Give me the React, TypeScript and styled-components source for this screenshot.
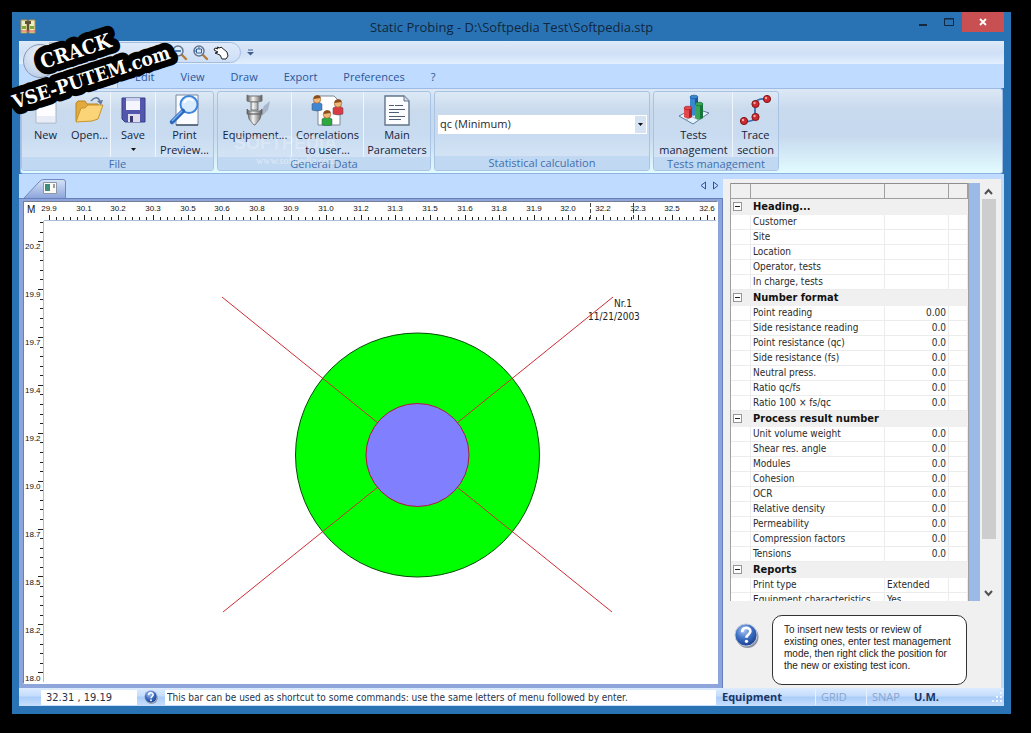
import React from 'react';
import styled, { createGlobalStyle } from 'styled-components';

const tahoma = '"DejaVu Sans Condensed", "DejaVu Sans", sans-serif';
const segoe = '"Open Sans", "Noto Sans", sans-serif';

const GlobalStyle = createGlobalStyle`
  *, *::before, *::after { box-sizing: border-box; }
  body { margin: 0; background: #000; font-family: ${segoe}; }
  button, input, select { font: inherit; color: inherit; border: 0; padding: 0; margin: 0; background: none; }
  svg { display: block; }
`;

const Desktop = styled.div`
  min-height: 100vh;
  padding: 12px 20px 19px 12px;
  display: flex;
`;
const Window = styled.main`
  position: relative;
  flex: 1;
  min-width: 0;
  display: flex;
  flex-direction: column;
  padding: 0 7px 8px;
  background: #2973b5;
`;
const TitleBar = styled.header`
  height: 29px;
  display: flex;
  align-items: center;
  justify-content: space-between;
`;
const Title = styled.h1`
  margin: 0;
  padding-left: 14px;
  flex: 1;
  text-align: center;
  font-size: 13px;
  line-height: 20px;
  font-weight: 400;
  color: #10263d;
`;
const WindowButtons = styled.div`
  display: flex;
  align-self: flex-start;
  height: 20px;
`;
const WindowButton = styled.button<{ $close?: boolean }>`
  width: ${(p) => (p.$close ? 42 : 26)}px;
  height: 20px;
  display: grid;
  place-items: center;
  background: ${(p) => (p.$close ? '#c85052' : 'transparent')};
`;
const AppIcon = styled.div`
  width: 80px;
  padding-left: 1px;
`;

const QuickBar = styled.div`
  height: 23px;
  flex: none;
  padding: 1px 0 1px 30px;
  display: flex;
  align-items: center;
  gap: 1px;
  background: linear-gradient(#dcebfa, #d5e3f5 30%, #cfe0f7 55%, #e2effd);
`;
const QuickTools = styled.div`
  height: 21px;
  width: 192px;
  padding-right: 10px;
  display: flex;
  align-items: center;
  justify-content: flex-end;
  gap: 4px;
  border: 1px solid #a4bddf;
  border-radius: 0 11px 11px 0;
  background: linear-gradient(#dfeafa, #cddff6);
`;
const ToolButton = styled.button`
  width: 17px;
  height: 18px;
  display: grid;
  place-items: center;
`;
const Orb = styled.button`
  position: absolute;
  left: 11px;
  top: 32px;
  width: 34px;
  height: 34px;
  border: 1px solid #8799b5;
  border-radius: 50%;
  background: radial-gradient(circle at 50% 30%, #eef4fc, #cbdaee 60%, #b3c6e2);
`;

const TabStrip = styled.nav`
  height: 24px;
  flex: none;
  padding-left: 32px;
  display: flex;
  background: #bfdbff;
`;
const ActiveTab = styled.button`
  width: 67px;
  margin-right: 4px;
  border-right: 1px solid #9dbbe5;
  border-radius: 0 3px 0 0;
  background: #dbe7f5;
`;
const MenuTab = styled.button`
  padding: 0 13px;
  font-size: 11px;
  line-height: 26px;
  color: #2c5697;
`;

const Ribbon = styled.section`
  height: 86px;
  flex: none;
  display: flex;
  gap: 3px;
  padding: 2px 0 2px;
  margin: 0 1px;
  border: 1px solid #9dbbe5;
  border-bottom-color: #8db2e3;
  border-radius: 3px;
  background: linear-gradient(#dce8f5, #c9daee 24%, #c6d9ee 55%, #e2fbff);
`;
const Group = styled.section<{ $width: number }>`
  width: ${(p) => p.$width}px;
  flex: none;
  display: flex;
  flex-direction: column;
  border: 1px solid #a8c3e4;
  border-radius: 3px;
  background: linear-gradient(#dde9f5, #c9daed 24%, #c8dbf0 55%, #dbe9f8);
  overflow: hidden;
`;
const GroupTools = styled.div`
  flex: 1;
  display: flex;
`;
const Caption = styled.h2`
  margin: 0;
  height: 14px;
  flex: none;
  text-align: center;
  font-size: 11px;
  line-height: 14px;
  font-weight: 400;
  color: #426fae;
  background: #c0d8f1;
`;
const RibbonButton = styled.button<{ $width: number; $divided?: boolean }>`
  width: ${(p) => p.$width}px;
  height: 65px;
  flex: none;
  display: flex;
  flex-direction: column;
  align-items: center;
  padding-top: 2px;
  font-size: 11px;
  line-height: 15px;
  color: #15233b;
  white-space: pre;
  border-left: 1px solid ${(p) => (p.$divided ? '#eef5fd' : 'transparent')};
  text-align: center;
`;
const ButtonText = styled.span`
  margin-top: 1px;
`;
const ComboBox = styled.label`
  position: relative;
  margin: 23px 2px 0 3px;
  height: 19px;
  flex: 1;
  display: flex;
  background: #fff;
`;
const Select = styled.select`
  appearance: none;
  flex: 1;
  padding: 0 18px 2px 2px;
  font-size: 11px;
  color: #26262c;
`;
const ComboArrow = styled.span`
  position: absolute;
  right: 1px;
  top: 1px;
  width: 11px;
  height: 17px;
  display: grid;
  place-items: center;
  background: #d5e3f3;
  pointer-events: none;
`;

const Workspace = styled.div`
  flex: 1;
  min-height: 0;
  display: flex;
  background: #bfdbff;
`;
const DocumentPane = styled.section`
  flex: 1;
  min-width: 0;
  display: flex;
  flex-direction: column;
`;
const DocumentTabs = styled.div`
  height: 24px;
  flex: none;
  padding: 5px 3px 0 5px;
  display: flex;
  justify-content: space-between;
`;
const DocumentTab = styled.button`
  height: 19px;
`;
const TabArrows = styled.div`
  display: flex;
  gap: 4px;
  height: 12px;
`;
const ArrowButton = styled.button`
  width: 9px;
  height: 12px;
  display: grid;
  place-items: center;
`;
const Frame = styled.div`
  flex: 1;
  min-height: 0;
  display: flex;
  padding: 2px 4px 4px;
  background: #8ea5db;
  border-top: 1px solid #6680bd;
  border-right: 1px solid #6680bd;
`;
const Drawing = styled.div`
  flex: 1;
  min-width: 0;
  border: 1px solid #777e91;
  border-right-color: #fff;
  border-bottom-color: #fff;
  background: #fff;
  overflow: hidden;
  text { font-family: "Liberation Sans", sans-serif; }
`;

const SidePane = styled.aside`
  width: 281px;
  flex: none;
  margin-top: 5px;
  display: flex;
  flex-direction: column;
  padding: 4px 4px 3px 7px;
  background: #f0f0f0;
  border-right: 3px solid #c3dbfb;
`;
const GridArea = styled.div`
  height: 418px;
  flex: none;
  display: flex;
  overflow: hidden;
`;
const GridClip = styled.div`
  flex: 1;
  min-width: 0;
  overflow: hidden;
  background: #9bbae7;
  padding-right: 11px;
`;
const PropertyTable = styled.table`
  width: 100%;
  table-layout: fixed;
  border-collapse: separate;
  border-spacing: 0;
  border-left: 1px solid #a0a0a0;
  border-right: 1px solid #a0a0a0;
  background: #fff;
  font-family: ${tahoma};
  font-size: 10px;
  color: #2b2b2b;
`;
const HeadCell = styled.th`
  height: 16px;
  padding: 0;
  background: #f0f0f0;
  border-top: 1px solid #8e8e8e;
  border-bottom: 1px solid #a0a0a0;
  border-right: 1px solid #a0a0a0;
`;
const SectionCell = styled.th`
  height: 16px;
  padding: 0 2px;
  background: #f0f0f0;
  text-align: left;
  vertical-align: top;
  font-weight: 700;
  font-size: 11px;
  line-height: 16px;
  color: #111;
`;
const Cell = styled.td<{ $text?: boolean }>`
  height: 15px;
  padding: 0 2px;
  line-height: 14px;
  white-space: nowrap;
  overflow: hidden;
  text-align: ${(p) => (p.$text === false ? 'right' : 'left')};
  border-bottom: 1px solid #ececec;
  border-right: 1px solid #ececec;
`;
const Toggle = styled.button`
  width: 9px;
  height: 9px;
  margin-top: 3px;
  display: grid;
  place-items: center;
  border: 1px solid #979797;
  background: #fff;
`;
const ScrollBar = styled.div`
  width: 17px;
  flex: none;
  display: flex;
  flex-direction: column;
  align-items: center;
  background: #f0f0f0;
`;
const ScrollButton = styled.button`
  width: 15px;
  height: 16px;
  flex: none;
  display: grid;
  place-items: center;
`;
const Track = styled.div`
  flex: 1;
  width: 14px;
`;
const Thumb = styled.div`
  height: 88%;
  background: #cdcdcd;
`;
const HelpRow = styled.div`
  display: flex;
  gap: 13px;
  padding: 14px 30px 0 4px;
`;
const HelpIcon = styled.div`
  padding-top: 8px;
`;
const Bubble = styled.p`
  margin: 0;
  flex: 1;
  height: 70px;
  padding: 8px 11px;
  border: 1px solid #333;
  border-radius: 10px;
  background: #fff;
  font: 10px/12px "Liberation Sans", sans-serif;
  color: #222;
  white-space: nowrap;
`;

const StatusBar = styled.footer`
  height: 18px;
  flex: none;
  display: flex;
  align-items: center;
  font-family: ${tahoma};
  font-size: 10px;
  color: #26334a;
  background: linear-gradient(#dcebff, #c4dcfc 45%, #a9ccf8 50%, #c8dffe);
`;
const Coordinates = styled.output`
  width: 96px;
  height: 15px;
  margin-left: 22px;
  padding-left: 5px;
  line-height: 15px;
  font-size: 11px;
  background: #fff;
`;
const StatusHelp = styled.button`
  width: 28px;
  display: grid;
  place-items: center;
`;
const Command = styled.input`
  flex: 1;
  min-width: 0;
  height: 15px;
  padding-left: 2px;
  background: #fff;
`;
const StatusCell = styled.button<{ $width: number; $off?: boolean }>`
  width: ${(p) => p.$width}px;
  height: 16px;
  padding-left: 5px;
  text-align: left;
  line-height: 16px;
  font-family: ${segoe};
  font-size: 11px;
  font-weight: ${(p) => (p.$off ? 400 : 700)};
  color: ${(p) => (p.$off ? '#86a5d1' : '#1b3564')};
  border-left: 1px solid ${(p) => (p.$off ? '#e6f2ff' : 'transparent')};
`;

const Sticker = styled.svg`
  position: absolute;
  left: 0;
  top: 12px;
  pointer-events: none;
`;
const FaintMark = styled.svg`
  position: absolute;
  left: 230px;
  top: 128px;
  pointer-events: none;
`;

const HelpGlyph = ({ size }: { size: number }) => (
  <svg width={size} height={size} viewBox="0 0 26 26">
    <defs>
      <radialGradient id={`help${size}`} cx="40%" cy="30%" r="75%">
        <stop offset="0" stopColor="#a9c6f2" />
        <stop offset=".5" stopColor="#3d6fc4" />
        <stop offset="1" stopColor="#173a86" />
      </radialGradient>
    </defs>
    <circle cx="14" cy="14.500" r="11.500" fill="#8b93a3" />
    <circle cx="12.500" cy="12.500" r="11.500" fill={`url(#help${size})`} stroke="#c5cede" />
    <path d="M8.500 9.500c0-6 8.500-5.500 8.500-.8 0 3.300-4 3.300-4 6.600" fill="none" stroke="#fff" strokeWidth="2.800" />
    <circle cx="13" cy="19" r="1.700" fill="#fff" />
  </svg>
);

const IconNew = () => (
  <svg width="32" height="32"><path d="M6 2h20v27H6z" fill="#fdfdff" stroke="#a9b4c8" /><path d="M7 22h18v6H7z" fill="#e9edf7" /></svg>
);
const IconOpen = () => (
  <svg width="32" height="32">
    <path d="M2 27V9l2-2h7l2 3h11v4" fill="#e2aa3c" stroke="#b98524" />
    <path d="M2 28l5-14h4l3-3h15l-5 14-6 2z" fill="#fbd478" stroke="#c8942e" />
    <path d="M17 7c4-5 8-4 9 1" fill="none" stroke="#63789b" strokeWidth="1.600" /><path d="M23 7l6-1-2 5z" fill="#63789b" />
  </svg>
);
const IconSave = () => (
  <svg width="32" height="32">
    <path d="M5 4h23v24H8l-3-3z" fill="#5356ad" stroke="#3b3c87" />
    <path d="M9 4h14v12H9z" fill="#f4f5fd" /><path d="M9 4h14v3H9z" fill="#ccd0ef" />
    <path d="M11 20h12v8H11z" fill="#dcdcea" /><path d="M13 22h3v6h-3z" fill="#38396f" />
  </svg>
);
const IconPreview = () => (
  <svg width="34" height="32">
    <path d="M8 1h22v30H8z" fill="#fbfcff" stroke="#78879f" /><path d="M8 31h22" stroke="#4b596e" strokeWidth="1.500" />
    <circle cx="21" cy="10.500" r="8.500" fill="#d9ecff" stroke="#3e84da" strokeWidth="2" />
    <path d="M16 9c2-5 7-5 9-2" fill="none" stroke="#fff" strokeWidth="2" />
    <path d="M15 17L4 28" stroke="#2a67bd" strokeWidth="4.500" strokeLinecap="round" /><path d="M14 17L4 27" stroke="#7fb5f2" strokeWidth="1.500" />
  </svg>
);
const IconProbe = () => (
  <svg width="32" height="32">
    <defs><linearGradient id="steel"><stop offset="0" stopColor="#555" /><stop offset=".4" stopColor="#f5f5f5" /><stop offset="1" stopColor="#555" /></linearGradient></defs>
    <path d="M20 22l5-10 6-5-2 9-9 9z" fill="#a7b6c9" />
    <path d="M8 1l2 1h11l2-1v6l-4 1h-7L8 7z" fill="url(#steel)" stroke="#777" />
    <path d="M12 8h7v8h-7zM8 15l2 2h11l2-2v5H8zM9 20h13l-1 5-5 6h-1l-5-6z" fill="url(#steel)" stroke="#666" strokeWidth=".8" />
  </svg>
);
const Person = ({ x, y, color }: { x: number; y: number; color: string }) => (
  <g transform={`translate(${x} ${y})`}>
    <path d="M0 15V9q5-4 10 0v6q-5 2-10 0z" fill={color} stroke="#40506a" strokeWidth=".5" />
    <circle cx="5" cy="4.500" r="3.700" fill="#efb878" stroke="#99602a" strokeWidth=".7" /><path d="M1.500 4q.5-4 4-3.700T8.500 3z" fill="#8a4d1e" />
  </g>
);
const IconPeople = () => (
  <svg width="34" height="32">
    <path d="M7 2h16l6 6v23H7z" fill="#fff" stroke="#7a8798" />
    <Person x={1} y={1} color="#3f86d2" /><Person x={22} y={5} color="#dc3a43" /><Person x={11} y={16} color="#2da83e" />
  </svg>
);
const IconDocument = () => (
  <svg width="32" height="32">
    <path d="M4 2h19l5 5v24H4z" fill="#fafcff" stroke="#637489" strokeWidth="1.400" /><path d="M23 2v5h5" fill="#cddbec" stroke="#637489" />
    <path d="M8 11.500h5M14 11.500h8M8 15.500h16M8 18.500h10M8 22.500h16M8 25.500h12" stroke="#4e5e77" />
  </svg>
);
const Cylinder = ({ x, y, h, a, b }: { x: number; y: number; h: number; a: string; b: string }) => (
  <g>
    <path d={`M${x} ${y}v${h}q4 3 8 0v-${h}z`} fill={a} /><path d={`M${x + 5} ${y}v${h + 1}l3-1v-${h}z`} fill={b} />
    <ellipse cx={x + 4} cy={y} rx="4" ry="1.800" fill={a} stroke={b} strokeWidth=".7" />
  </g>
);
const IconChart = () => (
  <svg width="32" height="32">
    <path d="M1 22L16 14 31 19 15 30z" fill="#e7f1fa" stroke="#5c7fa6" /><path d="M6 19l15 7M11 17l14 7M8 26l15-9" stroke="#9ab4cf" />
    <Cylinder x={12} y={3} h={17} a="#3987d0" b="#1c5696" /><Cylinder x={6} y={14} h={9} a="#e0484b" b="#a91f26" /><Cylinder x={17} y={10} h={14} a="#38a556" b="#16743a" />
  </svg>
);
const IconTrace = () => (
  <svg width="32" height="32">
    <path d="M4 28Q16 27 15 23V10Q16 4 27 5" fill="none" stroke="#3a6eb4" strokeWidth="1.800" />
    {[[4, 27], [15.5, 23], [15.5, 10], [27, 5]].map(([x, y]) => (
      <g key={y}><circle cx={x} cy={y} r="3.600" fill="#cf2a2f" stroke="#7e1519" /><circle cx={x - 1} cy={y - 1} r="1.200" fill="#f6a5a0" /></g>
    ))}
  </svg>
);

const Magnifier = ({ area }: { area?: boolean }) => (
  <svg width="17" height="17">
    <path d="M10 10l5 5" stroke="#b77b37" strokeWidth="2.400" strokeLinecap="round" />
    <circle cx="7" cy="7" r="5" fill="#dcecfb" stroke="#65768f" strokeWidth="1.500" />
    {area ? <path d="M4.500 5h5v4h-5zM7 5V3M4 7H2" fill="none" stroke="#34619c" /> : <path d="M4 7h6" stroke="#2f62a5" strokeWidth="1.600" />}
  </svg>
);
const Hand = () => (
  <svg width="17" height="17">
    <path d="M2 4l3 1-1-2 3 1 1-1 6 5 1 4-2 3H9L7 11 2 9l3-1-4-2z" fill="#fff" stroke="#222" />
  </svg>
);

const xLabels = ['29.9', '30.1', '30.2', '30.3', '30.5', '30.6', '30.8', '30.9', '31.0', '31.2', '31.3', '31.5', '31.6', '31.8', '31.9', '32.0', '32.2', '32.3', '32.5', '32.6'];
const yLabels = ['20.2', '19.9', '19.7', '19.4', '19.2', '19.0', '18.7', '18.5', '18.2', '18.0'];

const Plan = () => (
  <svg width="100%" height="100%">
    <g transform="translate(-24 -202)" shapeRendering="crispEdges">
      <path d="M43.500 220.500H716M43.500 220.500V682" stroke="#a9bdd6" fill="none" />
      {Array.from({ length: 97 }, (_, i) => {
        const x = Math.round(49 + (i * 658) / 95);
        return <path key={i} d={`M${x} 220V${i % 5 ? 217 : 215}`} stroke="#222" />;
      })}
      {Array.from({ length: 48 }, (_, i) => {
        const y = Math.round(222 + i * 9.58);
        return <path key={i} d={`M43 ${y}H${i % 5 === 2 ? 38 : 40}`} stroke="#222" />;
      })}
      <path d="M590.500 203V221M633.500 203V221" stroke="#444" strokeDasharray="4 2" />
    </g>
    <g transform="translate(-24 -202)">
      <text x="27" y="213" fontSize="10" fill="#111">M</text>
      {xLabels.map((t, i) => (
        <text key={t} x={Math.round(49 + i * 34.63)} y="211" fontSize="8" textAnchor="middle" fill="#111">{t}</text>
      ))}
      {yLabels.map((t, i) => (
        <text key={t} x="25" y={Math.round(249 + i * 48)} fontSize="8" fill="#111">{t}</text>
      ))}
      <circle cx="417.500" cy="455" r="122" fill="#00ff00" stroke="#064b06" />
      <g stroke="#d02c34" fill="none">
        <path d="M222 297L378 423M613 297L457 423M223 612L378 487M612 612L457 487" />
        <circle cx="417.500" cy="455" r="51.500" fill="#8080ff" stroke="#b01838" />
      </g>
      <g fontSize="10" fill="#222">
        <text x="614" y="307" style={{ fontFamily: tahoma }}>Nr.1</text>
        <text x="588" y="320" style={{ fontFamily: tahoma }}>11/21/2003</text>
      </g>
    </g>
  </svg>
);

type Row = [string, string];
const sections: { name: string; rows: Row[] }[] = [
  { name: 'Heading...', rows: [['Customer', ''], ['Site', ''], ['Location', ''], ['Operator, tests', ''], ['In charge, tests', '']] },
  { name: 'Number format', rows: [['Point reading', '0.00'], ['Side resistance reading', '0.0'], ['Point resistance (qc)', '0.0'], ['Side resistance (fs)', '0.0'], ['Neutral press.', '0.0'], ['Ratio qc/fs', '0.0'], ['Ratio 100 × fs/qc', '0.0']] },
  { name: 'Process result number', rows: [['Unit volume weight', '0.0'], ['Shear res. angle', '0.0'], ['Modules', '0.0'], ['Cohesion', '0.0'], ['OCR', '0.0'], ['Relative density', '0.0'], ['Permeability', '0.0'], ['Compression factors', '0.0'], ['Tensions', '0.0']] },
  { name: 'Reports', rows: [['Print type', 'Extended'], ['Equipment characteristics', 'Yes']] },
];

export default function App() {
  return (
    <Desktop>
      <GlobalStyle />
      <Window>
        <TitleBar>
          <AppIcon>
            <svg width="17" height="17"><path d="M1 2h6v13H1zM9 2h6v13H9z" fill="#e9efc4" stroke="#b38a45" /><path d="M2 8h4v3H2zM10 8h4v3h-4z" fill="#80a93c" /><path d="M5 3h6v3H9v7H7V6H5z" fill="#5e5238" /><path d="M1 13h14" stroke="#e1504a" /></svg>
          </AppIcon>
          <Title>Static Probing - D:\Softpedia Test\Softpedia.stp</Title>
          <WindowButtons>
            <WindowButton aria-label="Minimize"><svg width="10" height="10"><path d="M1 8h8" stroke="#14283f" strokeWidth="2" /></svg></WindowButton>
            <WindowButton aria-label="Maximize"><svg width="10" height="10"><path d="M.5 1.500h9v7h-9zM0 2h10" fill="none" stroke="#14283f" /></svg></WindowButton>
            <WindowButton $close aria-label="Close"><svg width="10" height="10"><path d="M2 2l6 6M8 2L2 8" stroke="#fff" strokeWidth="1.800" /></svg></WindowButton>
          </WindowButtons>
        </TitleBar>

        <QuickBar>
          <QuickTools>
            <ToolButton aria-label="Zoom out"><Magnifier /></ToolButton>
            <ToolButton aria-label="Zoom window"><Magnifier area /></ToolButton>
            <ToolButton aria-label="Pan"><Hand /></ToolButton>
          </QuickTools>
          <ToolButton aria-label="Customize toolbar"><svg width="7" height="7"><path d="M1 1h5" stroke="#41608f" /><path d="M0 3h7L3.500 6.500z" fill="#41608f" /></svg></ToolButton>
        </QuickBar>
        <TabStrip>
          <ActiveTab aria-label="Commands" />
          {['Edit', 'View', 'Draw', 'Export', 'Preferences', '?'].map((t) => <MenuTab key={t}>{t}</MenuTab>)}
        </TabStrip>
        <Orb aria-label="Application menu" />

        <Ribbon>
          <Group $width={193}>
            <GroupTools>
              <RibbonButton $width={46}><IconNew /><ButtonText>New</ButtonText></RibbonButton>
              <RibbonButton $width={42}><IconOpen /><ButtonText>Open...</ButtonText></RibbonButton>
              <RibbonButton $width={45} $divided><IconSave /><ButtonText>Save</ButtonText><svg width="5" height="14"><path d="M0 6h5L2.500 9z" fill="#111" /></svg></RibbonButton>
              <RibbonButton $width={58} $divided><IconPreview /><ButtonText>{'Print\nPreview...'}</ButtonText></RibbonButton>
            </GroupTools>
            <Caption>File</Caption>
          </Group>
          <Group $width={214}>
            <GroupTools>
              <RibbonButton $width={73}><IconProbe /><ButtonText>Equipment...</ButtonText></RibbonButton>
              <RibbonButton $width={72} $divided><IconPeople /><ButtonText>{'Correlations\nto user...'}</ButtonText></RibbonButton>
              <RibbonButton $width={67} $divided><IconDocument /><ButtonText>{'Main\nParameters'}</ButtonText></RibbonButton>
            </GroupTools>
            <Caption>General Data</Caption>
          </Group>
          <Group $width={216}>
            <GroupTools>
              <ComboBox>
                <Select aria-label="Statistical calculation"><option>qc (Minimum)</option><option>qc (Average)</option></Select>
                <ComboArrow><svg width="5" height="4"><path d="M0 0h5L2.500 3z" fill="#111" /></svg></ComboArrow>
              </ComboBox>
            </GroupTools>
            <Caption>Statistical calculation</Caption>
          </Group>
          <Group $width={126}>
            <GroupTools>
              <RibbonButton $width={78}><IconChart /><ButtonText>{'Tests\nmanagement'}</ButtonText></RibbonButton>
              <RibbonButton $width={46} $divided><IconTrace /><ButtonText>{'Trace\nsection'}</ButtonText></RibbonButton>
            </GroupTools>
            <Caption>Tests management</Caption>
          </Group>
        </Ribbon>

        <Workspace>
          <DocumentPane>
            <DocumentTabs>
              <DocumentTab aria-label="Plan">
                <svg width="42" height="19">
                  <defs><linearGradient id="tab" x2="0" y2="1"><stop offset="0" stopColor="#d6e4f8" /><stop offset="1" stopColor="#8ea5db" /></linearGradient></defs>
                  <path d="M0 19L15 3Q17 .5 20 .5H39Q41.500 .5 41.500 3V19" fill="url(#tab)" stroke="#7289bf" />
                  <path d="M19.500 3.500h13v11h-13z" fill="#fbfbf4" stroke="#8b98a8" /><path d="M21 5h5v7h-5z" fill="#3f8d80" /><path d="M30 5v4" stroke="#445" />
                </svg>
              </DocumentTab>
              <TabArrows>
                <ArrowButton aria-label="Previous"><svg width="6" height="9"><path d="M5.500 1v7L1 4.500z" fill="none" stroke="#2e5597" /></svg></ArrowButton>
                <ArrowButton aria-label="Next"><svg width="6" height="9"><path d="M.5 1v7L5 4.500z" fill="none" stroke="#2e5597" /></svg></ArrowButton>
              </TabArrows>
            </DocumentTabs>
            <Frame>
              <Drawing><Plan /></Drawing>
            </Frame>
          </DocumentPane>

          <SidePane>
            <GridArea>
              <GridClip>
                <PropertyTable>
                  <colgroup><col width="20" /><col /><col width="64" /><col width="19" /></colgroup>
                  <thead><tr><HeadCell /><HeadCell /><HeadCell /><HeadCell /></tr></thead>
                  {sections.map((s) => (
                    <tbody key={s.name}>
                      <tr>
                        <SectionCell><Toggle aria-label={`Collapse ${s.name}`}><svg width="5" height="1"><path d="M0 .5h5" stroke="#222" /></svg></Toggle></SectionCell>
                        <SectionCell colSpan={3}>{s.name}</SectionCell>
                      </tr>
                      {s.rows.map(([label, value]) => (
                        <tr key={label}>
                          <Cell /><Cell>{label}</Cell><Cell $text={!/^\d/.test(value)}>{value}</Cell><Cell />
                        </tr>
                      ))}
                    </tbody>
                  ))}
                </PropertyTable>
              </GridClip>
              <ScrollBar>
                <ScrollButton aria-label="Scroll up"><svg width="9" height="7"><path d="M1 6l3.500-4L8 6" fill="none" stroke="#505050" strokeWidth="2" /></svg></ScrollButton>
                <Track><Thumb /></Track>
                <ScrollButton aria-label="Scroll down"><svg width="9" height="7"><path d="M1 1l3.500 4L8 1" fill="none" stroke="#505050" strokeWidth="2" /></svg></ScrollButton>
              </ScrollBar>
            </GridArea>
            <HelpRow>
              <HelpIcon><HelpGlyph size={25} /></HelpIcon>
              <Bubble>To insert new tests or review of<br />existing ones, enter test management<br />mode, then right click the position for<br />the new or existing test icon.</Bubble>
            </HelpRow>
          </SidePane>
        </Workspace>

        <StatusBar>
          <Coordinates>32.31 , 19.19</Coordinates>
          <StatusHelp aria-label="Help"><HelpGlyph size={14} /></StatusHelp>
          <Command aria-label="Command" defaultValue="This bar can be used as shortcut to some commands: use the same letters of menu followed by enter." />
          <StatusCell $width={99}>Equipment</StatusCell>
          <StatusCell $width={51} $off>GRID</StatusCell>
          <StatusCell $width={42} $off>SNAP</StatusCell>
          <StatusCell $width={83}>U.M.</StatusCell>
          <svg width="13" height="13"><path d="M9 2h2M5 6h2M9 6h2M1 10h2M5 10h2M9 10h2" stroke="#eef6ff" strokeWidth="2" /></svg>
        </StatusBar>
      </Window>

      <FaintMark width="130" height="42">
        <text x="4" y="21" fontSize="18" fontWeight="700" fontFamily="Liberation Sans, sans-serif" fill="#fff" fillOpacity=".25">SOFTPEDIA</text>
        <text x="26" y="36" fontSize="10" fontFamily="Liberation Serif, serif" fill="#fff" fillOpacity=".5">www.softpedia.com</text>
      </FaintMark>
      <Sticker width="190" height="112">
        <g fontFamily="DejaVu Serif Condensed, DejaVu Serif, serif" fontWeight="700" fill="#fff" stroke="#000" strokeWidth="14" strokeLinejoin="round" paintOrder="stroke">
          <text transform="translate(15 97) rotate(-18)" fontSize="19">VSE-PUTEM.com</text>
          <text transform="translate(43 57) rotate(-18)" fontSize="20">CRACK</text>
        </g>
      </Sticker>
    </Desktop>
  );
}
